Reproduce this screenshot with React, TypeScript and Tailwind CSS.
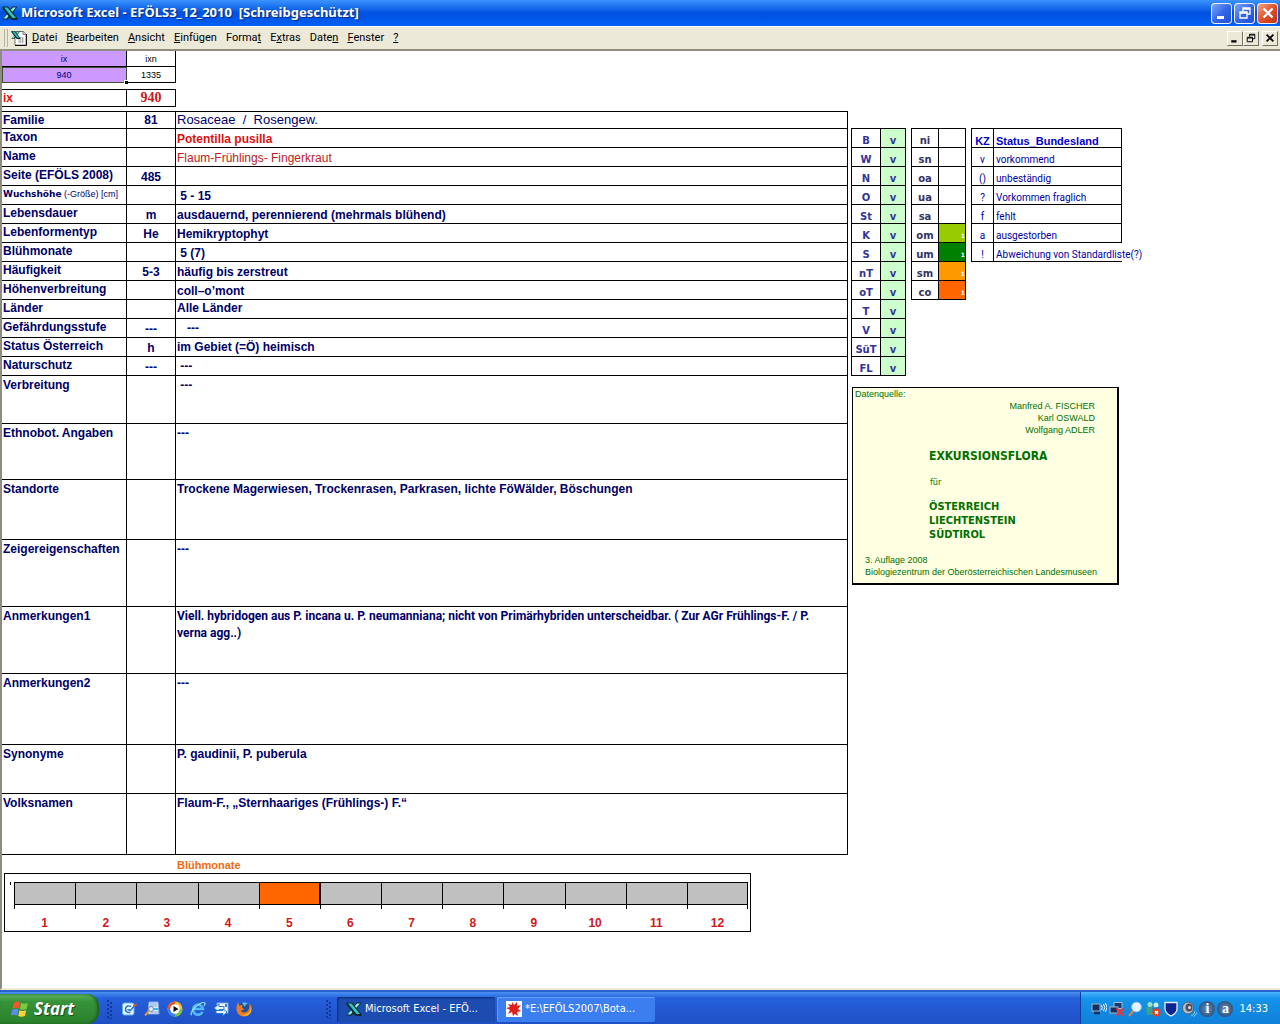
import type { ReactNode } from 'react';

type Row = {
  label: ReactNode;
  code?: string;
  text?: ReactNode;
  height: string;
  align?: string;
  tone?: string;
};

const SHORT = 'h-[19px]';

const rows: Row[] = [
  { label: 'Familie', code: '81', text: 'Rosaceae \u00a0/ \u00a0Rosengew.', height: 'h-[17px]', tone: 'text-[13px] font-normal' },
  { label: 'Taxon', text: 'Potentilla pusilla', height: SHORT, tone: 'text-[#e01010]' },
  { label: 'Name', text: 'Flaum-Frühlings- Fingerkraut', height: SHORT, tone: 'text-xs font-normal text-[#c02020]' },
  { label: 'Seite (EFÖLS 2008)', code: '485', height: SHORT },
  {
    label: (
      <span className="block text-[9px] leading-4 whitespace-nowrap">
        <b className="font-['DejaVu_Sans',sans-serif]">Wuchshöhe</b>{' '}
        <span className="font-normal">(-Größe) [cm]</span>
      </span>
    ),
    text: '\u00a05 - 15',
    height: SHORT,
  },
  { label: 'Lebensdauer', code: 'm', text: 'ausdauernd, perennierend (mehrmals blühend)', height: SHORT },
  { label: 'Lebenformentyp', code: 'He', text: 'Hemikryptophyt', height: SHORT },
  { label: 'Blühmonate', text: '\u00a05 (7)', height: SHORT },
  { label: 'Häufigkeit', code: '5-3', text: 'häufig bis zerstreut', height: SHORT },
  { label: 'Höhenverbreitung', text: 'coll–o’mont', height: SHORT },
  { label: 'Länder', text: 'Alle Länder', height: SHORT, align: 'align-top' },
  { label: 'Gefährdungsstufe', code: '---', text: '\u00a0\u00a0\u00a0---', height: SHORT, align: 'align-middle' },
  { label: 'Status Österreich', code: 'h', text: 'im Gebiet (=Ö) heimisch', height: SHORT, align: 'align-middle' },
  { label: 'Naturschutz', code: '---', text: '\u00a0---', height: SHORT, align: 'align-middle' },
];

const notes: Row[] = [
  { label: 'Verbreitung', text: '\u00a0---', height: 'h-[48px]' },
  { label: 'Ethnobot. Angaben', text: '---', height: 'h-[56px]' },
  { label: 'Standorte', text: 'Trockene Magerwiesen, Trockenrasen, Parkrasen, lichte FöWälder, Böschungen', height: 'h-[60px]' },
  { label: 'Zeigereigenschaften', text: '---', height: 'h-[67px]' },
  {
    label: 'Anmerkungen1',
    text: 'Viell. hybridogen aus P. incana u. P. neumanniana; nicht von Primärhybriden unterscheidbar. ( Zur AGr Frühlings-F. / P. verna agg..)',
    height: 'h-[67px]',
    tone: "pr-2 font-['Roboto',sans-serif]",
  },
  { label: 'Anmerkungen2', text: '---', height: 'h-[71px]' },
  { label: 'Synonyme', text: 'P. gaudinii, P. puberula', height: 'h-[49px]' },
  { label: 'Volksnamen', text: 'Flaum-F., „Sternhaariges (Frühlings-) F.“', height: 'h-[61px]' },
];

const regions = ['B', 'W', 'N', 'O', 'St', 'K', 'S', 'nT', 'oT', 'T', 'V', 'SüT', 'FL'];

const zones = [
  { name: 'ni', color: '' },
  { name: 'sn', color: '' },
  { name: 'oa', color: '' },
  { name: 'ua', color: '' },
  { name: 'sa', color: '' },
  { name: 'om', color: 'bg-[#99cc00]' },
  { name: 'um', color: 'bg-[#008000]' },
  { name: 'sm', color: 'bg-[#ff9900]' },
  { name: 'co', color: 'bg-[#ff6600]' },
];

const legend = [
  ['v', 'vorkommend'],
  ['()', 'unbeständig'],
  ['?', 'Vorkommen fraglich'],
  ['f', 'fehlt'],
  ['a', 'ausgestorben'],
  ['!', 'Abweichung von Standardliste(?)'],
];

// [before, underlined key, after]
const menus = [
  ['', 'D', 'atei'],
  ['', 'B', 'earbeiten'],
  ['', 'A', 'nsicht'],
  ['', 'E', 'infügen'],
  ['Forma', 't', ''],
  ['E', 'x', 'tras'],
  ['Date', 'n', ''],
  ['', 'F', 'enster'],
  ['', '?', ''],
];

const months = [1, 2, 3, 4, 5, 6, 7, 8, 9, 10, 11, 12];

function ExcelMark() {
  return (
    <>
      <path d="M10.500 1.500h5L6 14.500H.5z" fill="#0a2a30" />
      <path d="M11 2.500h3L4.500 13.500h-3z" fill="#8ff0e6" />
      <path d="M.5 1.500h5.500L15.500 13v2H9.500L.5 3.500z" fill="#0a2a30" />
      <path d="M2 2.500h3.500L14 13h-3.500z" fill="#2fc4c0" />
    </>
  );
}

function ExcelIcon({ className = 'size-4' }: { className?: string }) {
  return (
    <svg viewBox="0 0 16 16" className={className} aria-hidden="true">
      <ExcelMark />
    </svg>
  );
}

function WorkbookIcon() {
  return (
    <svg viewBox="0 0 16 16" className="size-4" aria-hidden="true">
      <path d="M4 1.500h8.500l2.500 2.500v11H4z" fill="#fff" stroke="#777" />
      <path d="M15.500 4v11.500H4" fill="none" stroke="#111" />
      <path d="M12 1v3.500h3" fill="#ddd" stroke="#555" strokeWidth=".7" />
      <path d="M7 8h6M7 10h6M7 12h6M9 7v6M11.500 7v6" stroke="#999" strokeWidth=".7" />
      <g transform="scale(.6)">
        <ExcelMark />
      </g>
    </svg>
  );
}

const GLYPHS: Record<string, ReactNode> = {
  min: <path d="M3 11h7v3H3z" fill="currentColor" />,
  restore: (
    <path d="M6 6V3h7v6h-3M6 4h7M3 7h7v6H3zM3 8h7" fill="none" stroke="currentColor" strokeWidth="1.300" />
  ),
  close: <path d="M3.500 3.500l9 9M12.500 3.500l-9 9" stroke="currentColor" strokeWidth="2.400" />,
};

function Glyph({ name, className }: { name: string; className: string }) {
  return (
    <svg viewBox="0 0 16 16" className={className} aria-hidden="true">
      {GLYPHS[name]}
    </svg>
  );
}

function TitleBar() {
  const box = 'flex size-[21px] items-center justify-center rounded border border-white/90 text-white';
  const blue = 'bg-linear-to-br from-[#7fa5f5] via-[#3467e8] to-[#1e4fd0]';
  return (
    <header className="flex h-[26px] items-center bg-linear-to-b from-[#3b93ff] via-[#0050e0] to-[#0260f5] pr-[2px] pl-[2px]">
      <ExcelIcon />
      <h1 className="ml-[3px] flex-1 font-['Noto_Sans','Open_Sans',sans-serif] text-[13px] font-bold whitespace-pre text-white [text-shadow:1px_1px_1px_#0a2a80]">
        Microsoft Excel - EFÖLS3_12_2010{'  '}[Schreibgeschützt]
      </h1>
      <div className="flex gap-[2px]">
        <button type="button" aria-label="Minimieren" className={`${box} ${blue}`}>
          <Glyph name="min" className="size-4" />
        </button>
        <button type="button" aria-label="Wiederherstellen" className={`${box} ${blue}`}>
          <Glyph name="restore" className="size-4" />
        </button>
        <button type="button" aria-label="Schließen" className={`${box} bg-linear-to-br from-[#f0a080] via-[#e0512c] to-[#c03010]`}>
          <Glyph name="close" className="size-4" />
        </button>
      </div>
    </header>
  );
}

function MenuBar() {
  const box =
    'flex h-[15px] w-4 items-center justify-center border border-t-white border-l-white border-r-[#716f64] border-b-[#716f64] bg-[#ece9d8]';
  return (
    <nav className="flex h-[25px] items-center border-t border-b-2 border-t-white border-b-[#8f8d80] bg-[#ece9d8] pr-[2px] pl-1 font-['Roboto',sans-serif] text-[11px] text-black">
      <div className="mr-[3px] h-[18px] w-[4px] border-x border-[#b5b2a0]" />
      <WorkbookIcon />
      <ul className="ml-[5px] flex flex-1 gap-[9px]">
        {menus.map(([pre, key, post]) => (
          <li key={pre + key + post}>
            <button type="button">
              {pre}
              <u>{key}</u>
              {post}
            </button>
          </li>
        ))}
      </ul>
      <div className="flex">
        <button type="button" aria-label="Fenster minimieren" className={box}>
          <Glyph name="min" className="size-3" />
        </button>
        <button type="button" aria-label="Fenster wiederherstellen" className={box}>
          <Glyph name="restore" className="size-3" />
        </button>
        <button type="button" aria-label="Fenster schließen" className={`${box} ml-[3px]`}>
          <Glyph name="close" className="size-3" />
        </button>
      </div>
    </nav>
  );
}

function IndexTables() {
  return (
    <>
      <table className="w-[174px] table-fixed border-separate border-spacing-0 text-center text-[9px] leading-[14px]">
        <thead>
          <tr className="h-4">
            <th className="w-[125px] border-r border-b border-black bg-[#cc99ff] font-normal text-[#000080]">ix</th>
            <th className="border-r border-b border-black font-normal">ixn</th>
          </tr>
        </thead>
        <tbody>
          <tr className="h-4">
            <td className="relative border-r border-b border-black bg-[#cc99ff] text-[#000080] outline-1 -outline-offset-1 outline-[#3f4f2f]">
              940
              <span className="absolute -right-[2px] -bottom-[2px] size-[4px] border-t border-l border-white bg-black" />
            </td>
            <td className="border-r border-b border-black">1335</td>
          </tr>
        </tbody>
      </table>
      <table className="mt-[6px] w-[174px] table-fixed border-separate border-spacing-0 border-t border-black text-xs leading-4 font-bold text-[#e01010]">
        <tbody>
          <tr className="h-[17px]">
            <th scope="row" className="w-[125px] border-r border-b border-black pl-px text-left">
              ix
            </th>
            <td className="border-r border-b border-black text-center font-['Liberation_Serif',serif] text-sm leading-4 text-[#c81818]">
              940
            </td>
          </tr>
        </tbody>
      </table>
    </>
  );
}

function TaxonTable() {
  return (
    <table className="mt-1 w-full table-fixed border-separate border-spacing-0 border-t border-black text-xs text-[#000066]">
      <colgroup>
        <col className="w-[125px]" />
        <col className="w-[49px]" />
        <col />
      </colgroup>
      <tbody className="leading-4">
        {rows.map((row, i) => (
          <tr key={i} className={row.height}>
            <th scope="row" className="border-r border-b border-black pl-px text-left align-top">
              {row.label}
            </th>
            <td className="border-r border-b border-black text-center align-bottom font-bold">{row.code}</td>
            <td className={`border-r border-b border-black pl-px ${row.align ?? 'align-bottom'} ${row.tone?.includes('font-normal') ? '' : 'font-bold'} ${row.tone ?? ''}`}>
              {row.text}
            </td>
          </tr>
        ))}
      </tbody>
      <tbody className="leading-[17px]">
        {notes.map((row, i) => (
          <tr key={i} className={row.height}>
            <th scope="row" className="border-r border-b border-black pt-px pl-px text-left align-top">
              {row.label}
            </th>
            <td className="border-r border-b border-black" />
            <td className={`border-r border-b border-black pt-px pl-px align-top font-bold ${row.tone ?? ''}`}>{row.text}</td>
          </tr>
        ))}
      </tbody>
    </table>
  );
}

function MonthChart() {
  return (
    <section>
      <h2 className="pt-[2px] pl-[175px] text-[11px] leading-4 font-bold text-[#f06a10]">Blühmonate</h2>
      <div className="mr-[97px] ml-[2px] flex h-[59px] border border-black pt-2 pr-[2px]">
        <div className="mr-[3px] ml-[5px] h-[3px] w-px shrink-0 bg-black" />
        <ol className="grid flex-1 grid-cols-12 text-center text-xs font-bold text-[#d01818]">
          {months.map((m) => (
            <li key={m}>
              <div className={`h-[27px] border-l border-black ${m === 12 ? 'border-r' : ''}`}>
                <div className={`h-[23px] border-y border-black ${m === 5 ? 'border-r bg-[#ff6600]' : 'bg-[#c0c0c0]'}`} />
              </div>
              <span className="mt-[6px] block leading-4">{m}</span>
            </li>
          ))}
        </ol>
      </div>
    </section>
  );
}

function StatusTables() {
  const table = 'table-fixed border-separate border-spacing-0 border-t border-l border-black';
  const cell = 'h-[19px] border-r border-b border-black p-0 align-bottom';
  return (
    <div className="flex items-start gap-[5px] text-[10px] leading-3">
      <table className={`${table} w-[55px] text-center font-['DejaVu_Sans',sans-serif] font-bold text-[#333399]`}>
        <tbody>
          {regions.map((name) => (
            <tr key={name}>
              <th scope="row" className={`${cell} w-[29px]`}>
                {name}
              </th>
              <td className={`${cell} bg-[#ccffcc]`}>v</td>
            </tr>
          ))}
        </tbody>
      </table>
      <table className={`${table} w-[55px] text-center font-['DejaVu_Sans',sans-serif] font-bold text-[#333366]`}>
        <tbody>
          {zones.map((zone) => (
            <tr key={zone.name}>
              <th scope="row" className={`${cell} w-[27px]`}>
                {zone.name}
              </th>
              <td className={`${cell} text-right text-[6px] text-white ${zone.color}`}>{zone.color && '1'}</td>
            </tr>
          ))}
        </tbody>
      </table>
      <table className={`${table} w-[151px] font-['Roboto',sans-serif] text-[#0000a0]`}>
        <thead>
          <tr className="font-['Liberation_Sans',Arial,sans-serif] text-[11px] text-[#0000cc]">
            <th className={`${cell} w-[22px]`}>KZ</th>
            <th className={`${cell} pl-[2px] text-left`}>Status_Bundesland</th>
          </tr>
        </thead>
        <tbody>
          {legend.map(([key, text]) => (
            <tr key={key}>
              <td className={`${cell} text-center`}>{key}</td>
              <td className={`${cell} pl-[2px] whitespace-nowrap ${key === '!' ? 'border-r-0' : ''}`}>{text}</td>
            </tr>
          ))}
        </tbody>
      </table>
    </div>
  );
}

function SourceNote() {
  return (
    <section className="mt-[11px] ml-px w-[267px] border border-r-2 border-b-2 border-black bg-[#ffffe1] px-[2px] pb-[5px] text-[9px] leading-3 text-[#007000]">
      <p>Datenquelle:</p>
      <p className="pr-[20px] text-right">
        Manfred A. FISCHER
        <br />
        Karl OSWALD
        <br />
        Wolfgang ADLER
      </p>
      <div className="pl-[74px] font-['DejaVu_Sans_Condensed','DejaVu_Sans',sans-serif]">
        <h2 className="mt-3 text-xs leading-4 font-bold">EXKURSIONSFLORA</h2>
        <p className="mt-3 pl-px text-[9px] leading-3">für</p>
        <p className="mt-3 text-[11px] leading-[14px] font-bold">
          ÖSTERREICH
          <br />
          LIECHTENSTEIN
          <br />
          SÜDTIROL
        </p>
      </div>
      <p className="mt-3 pl-[10px] whitespace-nowrap">
        3. Auflage 2008
        <br />
        Biologiezentrum der Oberösterreichischen Landesmuseen
      </p>
    </section>
  );
}

function WindowsFlag() {
  return (
    <svg viewBox="0 0 20 20" className="size-5" aria-hidden="true">
      <path d="M4 3.500Q7 1.500 10 3.500L8.800 9.500Q5.500 7.800 2.500 9.500z" fill="#f0582a" />
      <path d="M11 4Q14 5.600 18 4L16.500 10Q13 11.500 9.800 10z" fill="#7ccb3c" />
      <path d="M2.300 10.700Q5.500 9 8.500 10.600L7 16.500Q4 15 1 16.500z" fill="#5a8df5" />
      <path d="M9.500 11.200Q12.500 12.600 16.200 11.200L15 17Q11.500 18.500 8.200 17z" fill="#fbd03a" />
    </svg>
  );
}

function Grip() {
  return (
    <svg viewBox="0 0 6 20" className="h-5 w-[6px]" aria-hidden="true">
      {[1, 5, 9, 13, 17].map((y) => (
        <g key={y} fill="#12379c">
          <rect x="0" y={y} width="2" height="2" />
          <rect x="3" y={y + 2} width="2" height="2" />
        </g>
      ))}
    </svg>
  );
}

const launchers: { name: string; art: ReactNode }[] = [
  {
    name: 'Desktop anzeigen',
    art: (
      <>
        <rect x="1.500" y="2" width="11.500" height="12" rx="2" fill="#e8f4ff" stroke="#5fb0f0" />
        <path d="M10 5.500Q6 3.500 4.500 7.500 4 12 9.500 11.500M6.500 8.500l3 1L14 4" fill="none" stroke="#1b72c8" strokeWidth="1.400" />
        <path d="M12.500 5.500L15.500 3" stroke="#d0592a" strokeWidth="2" />
      </>
    ),
  },
  {
    name: 'Suchen',
    art: (
      <>
        <path d="M5 1h9l1 12H4z" fill="#dcecff" stroke="#86a8d8" />
        <path d="M6 3h7M6 5h7M7 11h7" stroke="#7fa8e0" />
        <path d="M10 7h4v2h-4z" fill="#48b0f0" />
        <circle cx="7" cy="8" r="2.500" fill="#d8f0ff" stroke="#6a88b0" />
        <path d="M5 10l-4 4.500" stroke="#e09a50" strokeWidth="2" />
      </>
    ),
  },
  {
    name: 'Media Player',
    art: (
      <>
        <circle cx="8" cy="8" r="7.500" fill="#f8c030" />
        <path d="M8 8V.5A7.500 7.500 0 0 0 .5 8z" fill="#e8502a" />
        <path d="M8 8H.5a7.500 7.500 0 0 0 7.500 7.500z" fill="#3b82e8" />
        <path d="M8 8v7.500a7.500 7.500 0 0 0 7.500-7.500z" fill="#78c040" />
        <circle cx="8" cy="8" r="4.800" fill="#fff" />
        <path d="M6.500 5L11.500 8l-5 3z" fill="#111" />
      </>
    ),
  },
  {
    name: 'Internet Explorer',
    art: (
      <>
        <path d="M12.500 11A5 5 0 1 1 13 8H4" fill="none" stroke="#4fb8ff" strokeWidth="2.600" />
        <path d="M2 14Q-1 13 5 6.500 12 0 15 2q.5 1-1 3" fill="none" stroke="#9adcff" strokeWidth="1.200" />
      </>
    ),
  },
  {
    name: 'Outlook Express',
    art: (
      <>
        <path d="M4 2h11v10H4z" fill="#f2f8ff" stroke="#7fa8d8" />
        <path d="M12 3h2v3h-2z" fill="#3b82d8" />
        <path d="M1 7l5-4v2.500h5v3H6V11z" fill="#e4f4ff" stroke="#2a7bd0" />
        <path d="M14 11l-4 4v-2.500H3v-3h7V8z" fill="#e4f4ff" stroke="#2a7bd0" />
      </>
    ),
  },
  {
    name: 'Firefox',
    art: (
      <>
        <circle cx="8" cy="8" r="6.500" fill="#24509c" />
        <path d="M6 2q3-2 6 1-3 0-3 3z" fill="#6ab4f0" />
        <path d="M2 1Q0 5 .5 9 2 15.500 8 15.500T15.500 9q.5-4-2-6.500.5 4-1 6.500-2 3-5 2.500Q5 11 5 9q2 1 3-1L6 7q0-2 1-2.500Q4 4 3.500 5 2.500 3 2 1z" fill="#f07c1c" />
        <path d="M14 4q1.500 4-.5 7-3 4-8 2.500 5 3 8.500-1 2.500-4 0-8.500z" fill="#fbc43a" />
      </>
    ),
  },
];

const trayArt: ReactNode[] = [
  <>
    <rect x="1" y="3" width="8" height="7" fill="#14305e" stroke="#9fb4d0" />
    <path d="M3 12h6" stroke="#14305e" strokeWidth="2.500" />
    <path d="M10.500 4q1.500 2 0 5M12.500 3q2.500 3.500 0 7M14.500 2q3 4.500 0 9" fill="none" stroke="#e8f4ff" />
  </>,
  <>
    <rect x="5" y="1.500" width="8" height="6" fill="#183a70" stroke="#a8b8d0" />
    <rect x="1" y="6" width="8" height="6" fill="#14305e" stroke="#a8b8d0" />
    <path d="M7.500 7.500l7 7M14.500 7.500l-7 7" stroke="#e03a3a" strokeWidth="2.400" />
  </>,
  <>
    <path d="M7 9l-5 6" stroke="#d98550" strokeWidth="2" />
    <circle cx="9.500" cy="6" r="4.800" fill="#e4f5ff" stroke="#9cc8f0" />
  </>,
  <>
    <circle cx="5" cy="3.500" r="2.500" fill="#9fe0b8" />
    <path d="M1 6h8l-1 8H2z" fill="#3fa08a" />
    <circle cx="11" cy="4" r="2.500" fill="#c8f0e0" />
    <path d="M7 7l7-1v5H8z" fill="#2f78b8" />
    <circle cx="11.500" cy="11.500" r="4" fill="#e0401c" />
    <path d="M10 10l3 3M13 10l-3 3" stroke="#fff" strokeWidth="1.300" />
  </>,
  <path d="M2 1.500h12V8q0 4-6 7-6-3-6-7z" fill="#0e2490" stroke="#e8ecf8" strokeWidth="1.300" />,
  <>
    <ellipse cx="7" cy="7" rx="5.500" ry="6" fill="#b8bcc4" stroke="#5a6270" />
    <ellipse cx="8" cy="6.500" rx="3.500" ry="4" fill="#4c5260" />
    <circle cx="8.500" cy="6.500" r="1.500" fill="#dde" />
    <path d="M10 15q4-1 4-5M12.500 15.500q3-1.500 3-4" fill="none" stroke="#7cc8ff" />
  </>,
];

function TaskBar() {
  const task = 'flex h-[25px] w-[158px] items-center gap-[3px] rounded-xs pl-[9px]';
  const badge =
    "flex size-4 items-center justify-center rounded-full bg-radial from-[#6b90b8] to-[#173d6c] font-['Liberation_Serif',serif] text-sm leading-none font-bold";
  return (
    <footer className="flex h-[34px] items-stretch border-t-2 border-[#2a62cc] bg-linear-to-b from-[#4a90f0] via-[#2560dc] via-20% to-[#1f4fc4] text-[11px] text-white">
      <button
        type="button"
        className="mt-[2px] mr-2 flex w-[99px] items-center gap-1 rounded-r-xl bg-linear-to-b from-[#5fb35f] via-[#37933a] via-25% to-[#2a802c] pl-[10px] font-['Open_Sans',sans-serif] text-[17px] font-bold italic shadow-[inset_-2px_0_3px_#1d5c20] [text-shadow:1px_1px_1px_#1a4a1a]"
      >
        <WindowsFlag />
        Start
      </button>
      <div className="flex flex-1 items-center pt-[2px]">
        <Grip />
        <div className="mr-[74px] ml-2 flex gap-[7px]">
          {launchers.map((item) => (
            <button key={item.name} type="button" aria-label={item.name}>
              <svg viewBox="0 0 16 16" className="size-4" aria-hidden="true">
                {item.art}
              </svg>
            </button>
          ))}
        </div>
        <Grip />
        <button type="button" className={`${task} ml-[5px] bg-[#1c4cb0] shadow-[inset_1px_1px_2px_#0c2c78]`}>
          <ExcelIcon />
          Microsoft Excel - EFÖ...
        </button>
        <button type="button" className={`${task} ml-[2px] bg-[#3b7ef0] shadow-[inset_1px_1px_1px_#6aa0ff]`}>
          <svg viewBox="0 0 16 16" className="size-4" aria-hidden="true">
            <rect width="16" height="16" fill="#fff" />
            <path d="M6 1l2 3 3-3v4l4-1-3 4 3 2-4 1 1 4-3-2-2 2-1-4-4 2 2-4-4-2 4-1-2-3 4 1z" fill="#e02020" />
          </svg>
          *E:\EFÖLS2007\Bota...
        </button>
      </div>
      <div className="flex items-center gap-[2px] border-l border-[#0c3fa0] bg-linear-to-b from-[#4ab4ff] via-[#1593ea] via-20% to-[#1080d8] pt-[2px] pr-3 pl-[10px]">
        {trayArt.map((art, i) => (
          <svg key={i} viewBox="0 0 16 16" className="size-4" aria-hidden="true">
            {art}
          </svg>
        ))}
        <span className={badge}>i</span>
        <span className={badge}>a</span>
        <time className="ml-1">14:33</time>
      </div>
    </footer>
  );
}

export default function App() {
  return (
    <div className="flex min-h-screen flex-col bg-white font-['DejaVu_Sans_Condensed','DejaVu_Sans',sans-serif]">
      <TitleBar />
      <MenuBar />
      <main className="flex flex-1 border-b-2 border-l-2 border-b-[#ece9d8] border-l-[#8f8d80] font-['Liberation_Sans',Arial,sans-serif]">
        <div className="min-w-0 flex-1">
          <IndexTables />
          <TaxonTable />
          <MonthChart />
        </div>
        <aside className="w-[432px] shrink-0 pt-[77px] pl-[3px]">
          <StatusTables />
          <SourceNote />
        </aside>
      </main>
      <TaskBar />
    </div>
  );
}
